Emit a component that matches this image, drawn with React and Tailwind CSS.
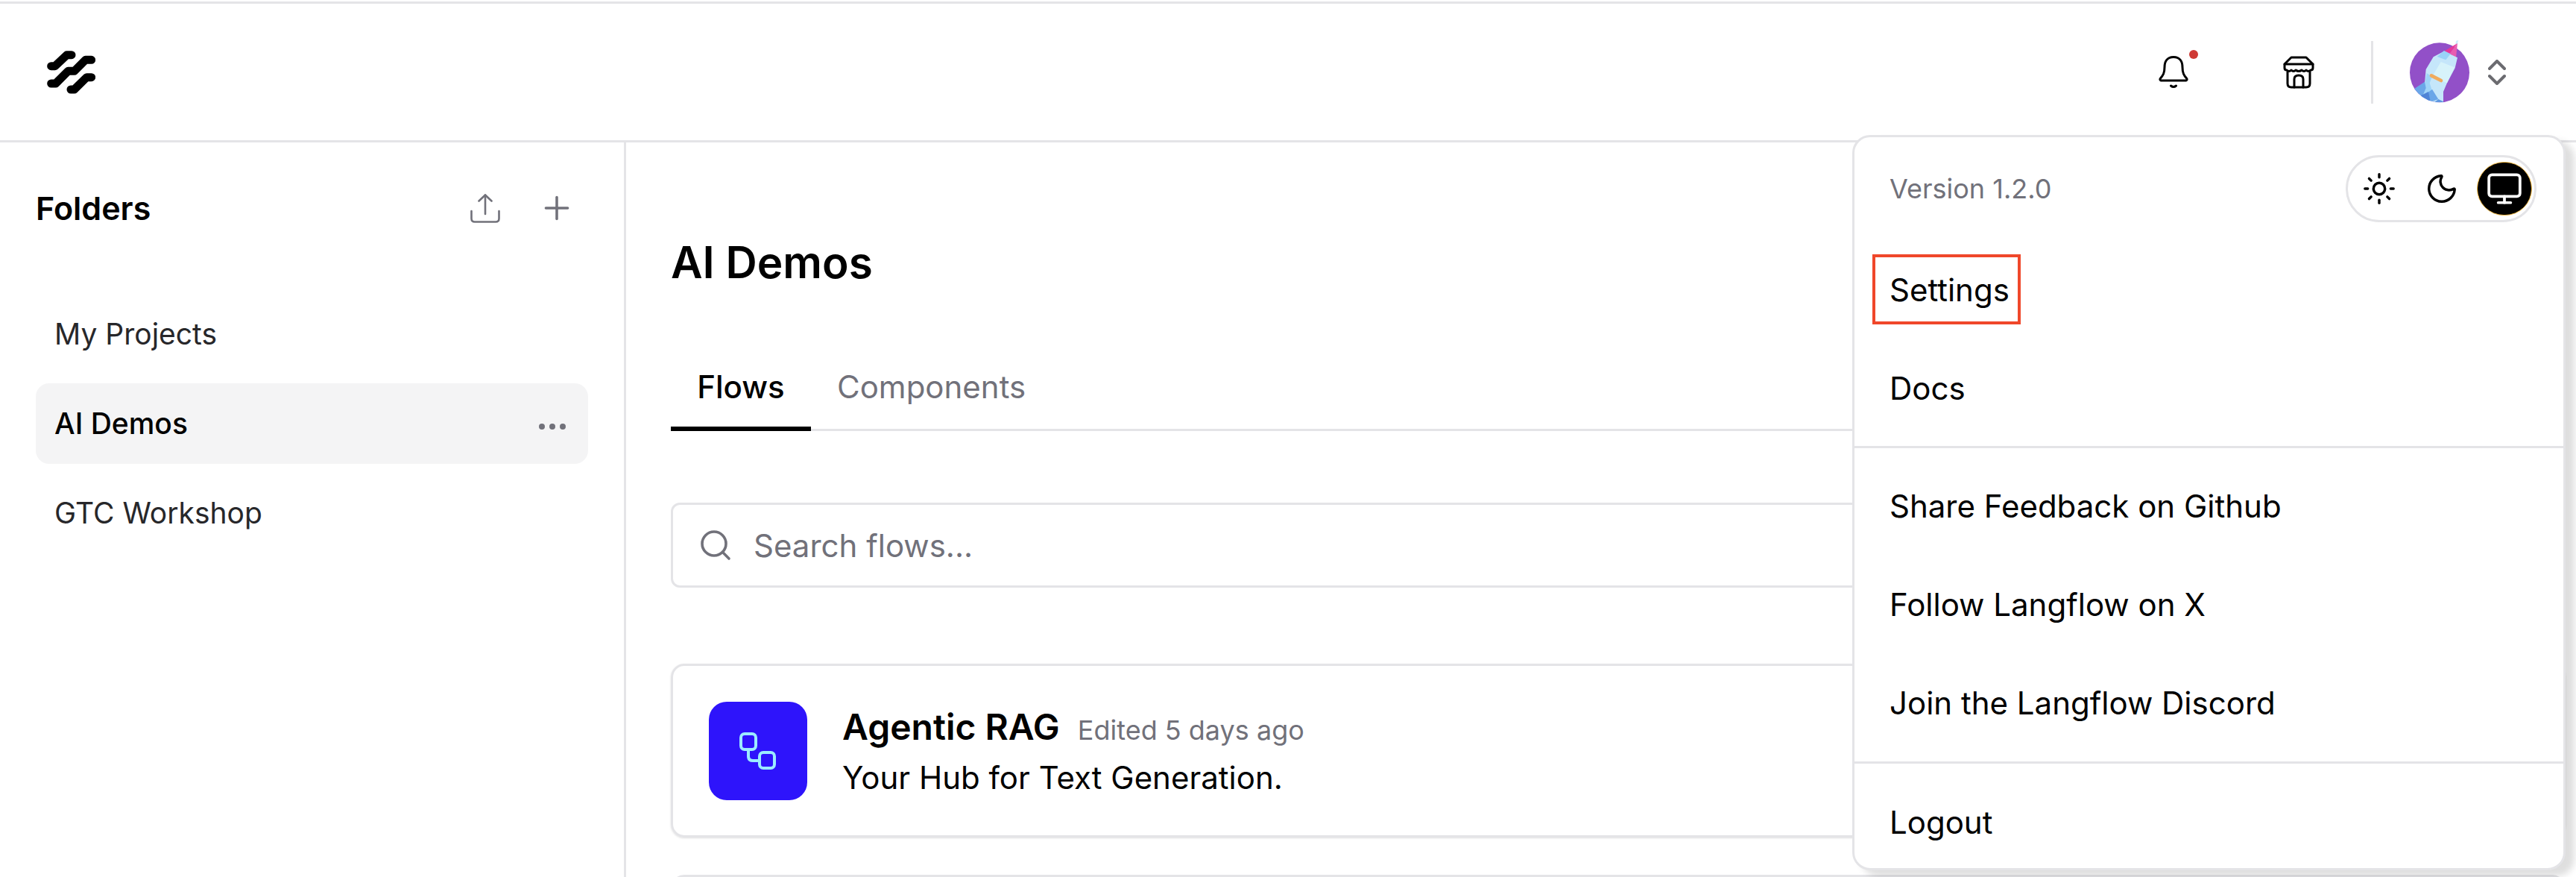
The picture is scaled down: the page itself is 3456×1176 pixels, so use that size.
import React from "react";
import { Plus, Search, Ellipsis, Sun, Moon, Monitor } from "lucide-react";

const font = "font-['Inter','Liberation_Sans',sans-serif]";

function Logo() {
  return (
    <svg width="65" height="60" viewBox="40 30 195 180" className="shrink-0">
      <g fill="none" stroke="#000" strokeWidth="33" strokeLinejoin="round" strokeLinecap="round">
        <path d="M57 95H72L120 50H139" />
        <path d="M57 165H75L125 115H150L195 70H219" />
        <path d="M136 189H150L200 140H219" />
      </g>
    </svg>
  );
}

function BellIcon() {
  return (
    <svg width="40" height="44" viewBox="0 0 40 44" fill="none" stroke="#000" strokeWidth="3" strokeLinecap="round" strokeLinejoin="round">
      <path d="M20 1.5C11 1.5 8 8 8 15C8 23 6 26 2.5 30Q1 32 3 33H37Q39 32 37.5 30C34 26 32 23 32 15C32 8 29 1.5 20 1.5Z" />
      <path d="M16.5 40Q20 43 23.5 40" />
    </svg>
  );
}

function StoreIcon() {
  return (
    <svg width="42" height="44" viewBox="0 0 42 44" fill="none" stroke="#000" strokeWidth="3" strokeLinecap="round" strokeLinejoin="round">
      <path d="M11 2H31L40 11V16Q40 19 37 19Q34 22 31 19Q28 22 25 19Q21 22 17 19Q14 22 11 19Q8 22 5 19Q2 19 2 16V11Z" />
      <path d="M2 11H40" />
      <path d="M6 21V37Q6 42 11 42H31Q36 42 36 37V21" />
      <path d="M15 42V31Q15 26 21 26Q27 26 27 31V42" />
    </svg>
  );
}

function UploadIcon() {
  return (
    <svg width="40" height="39" viewBox="0 0 40 39" fill="none" stroke="currentColor" strokeWidth="2.6" strokeLinecap="round" strokeLinejoin="round" className="text-[#71717a]">
      <path d="M11.5 9.5L20 1.5L28.5 9.5" />
      <path d="M20 1.5V27" />
      <path d="M1.5 23V33Q1.5 37.5 6 37.5H34Q38.5 37.5 38.5 33V23" />
    </svg>
  );
}

function Chevrons() {
  return (
    <svg width="24" height="34" viewBox="0 0 24 34" fill="none" stroke="#6b6b70" strokeWidth="4" strokeLinecap="round" strokeLinejoin="round" className="shrink-0">
      <path d="M2 12L12 2L22 12" />
      <path d="M2 22L12 32L22 22" />
    </svg>
  );
}

function FlowIcon() {
  return (
    <svg width="50" height="50" viewBox="0 0 50 50" fill="none" stroke="#9cecff" strokeWidth="4" strokeLinecap="round" strokeLinejoin="round">
      <rect x="2" y="2" width="20" height="21" rx="5" />
      <rect x="27" y="27" width="20" height="21" rx="5" />
      <path d="M12 23V32Q12 38 18 38H27" />
    </svg>
  );
}

function Avatar() {
  return (
    <svg width="81" height="92" viewBox="40 9 243 276" className="shrink-0">
      <defs>
        <clipPath id="avatarClip">
          <circle cx="160" cy="148" r="120" />
          <rect x="100" y="0" width="180" height="100" />
        </clipPath>
      </defs>
      <circle cx="160" cy="148" r="120" fill="#9250c8" />
      <g clipPath="url(#avatarClip)">
        <path d="M226 20L236 18L232 32L224 34Z" fill="#cdeefc" />
        <path d="M178 62L232 30L200 72Z" fill="#e5389a" />
        <path d="M232 30L226 88L200 72Z" fill="#e85cb0" />
        <path d="M178 62L232 88L222 130L190 190L175 225V275H90L100 190L105 135L135 85Z" fill="#c5e6fa" />
        <path d="M178 60L204 73L185 97L150 84Z" fill="#99d2f8" />
        <path d="M165 105L220 127L190 190L130 165Z" fill="#d7f3fa" />
        <path d="M108 150L130 165L120 190L128 215L90 275L70 240L100 195Z" fill="#9fd4f8" />
        <path d="M100 185L105 210L80 270L50 218Z" fill="#6aa6e8" />
        <path d="M130 215L155 255L100 275L85 250Z" fill="#6aa6e8" />
        <path d="M85 240L115 225L125 275H85Z" fill="#4f84d6" />
        <path d="M155 255L175 265V275H130Z" fill="#5f97e0" />
        <path d="M127 160L166 180" stroke="#f0ab5e" strokeWidth="14" strokeLinecap="round" />
      </g>
    </svg>
  );
}

function MenuRow({ children, boxed, short }) {
  return (
    <div className={`${short ? "h-[128px]" : "h-[132px]"} flex items-center px-[47px] text-[42px] text-black`}>
      <span className={boxed ? "relative" : ""}>
        {children}
        {boxed && <span className="absolute -left-[23px] -right-[15px] -top-[16px] -bottom-[15px] border-[4px] border-[#f0472a]" />}
      </span>
    </div>
  );
}

export default function App() {
  return (
    <div className={`${font} relative h-[1176px] w-[3456px] overflow-hidden bg-white text-black`}>
      <div className="h-[189px] mt-[2px] border-t-[3px] border-b-[3px] border-[#e4e4e7] flex items-center pl-[63px] pr-[94px]">
        <Logo />
        <div className="ml-auto flex items-center">
          <div className="relative mr-[127px]">
            <BellIcon />
            <span className="absolute left-[41px] -top-[8px] w-[12px] h-[12px] rounded-full bg-[#cf3a35]" />
          </div>
          <div className="mr-[76px]">
            <StoreIcon />
          </div>
          <div className="w-[3px] h-[84px] bg-[#e4e4e7] mr-[49px]" />
          <Avatar />
          <div className="ml-[24px]">
            <Chevrons />
          </div>
        </div>
      </div>

      <div className="flex h-[985px]">
        <aside className="w-[840px] shrink-0 border-r-[3px] border-[#e4e4e7] px-[48px]">
          <div className="flex items-center justify-between h-[96px] mt-[40px] pr-[17px]">
            <span className="text-[43px] font-semibold">Folders</span>
            <div className="flex items-center gap-[51px] text-[#71717a]">
              <UploadIcon />
              <Plus size={50} strokeWidth={1.7} />
            </div>
          </div>
          <div className="mt-[67px] flex flex-col gap-[12px]">
            <div className="h-[108px] flex items-center px-[25px] text-[39px] text-[#27272a]">My Projects</div>
            <div className="h-[108px] flex items-center justify-between pl-[25px] pr-[24px] rounded-[18px] bg-[#f4f4f5] text-[39px] font-medium">
              AI Demos
              <Ellipsis size={48} className="text-[#71717a] mt-[8px]" />
            </div>
            <div className="h-[108px] flex items-center px-[25px] text-[39px] text-[#27272a]">GTC Workshop</div>
          </div>
        </aside>

        <main className="flex-1 pl-[60px] pr-[14px]">
          <h1 className="mt-[126px] text-[58.5px] font-semibold leading-[70px]">AI Demos</h1>
          <div className="mt-[92px] flex h-[99px] border-b-[3px] border-[#e4e4e7] text-[42px]">
            <div className="w-[188px] h-[99px] text-center border-b-[6px] border-black pt-[8px] font-medium">Flows</div>
            <div className="ml-[35px] pt-[8px] text-[#71717a]">Components</div>
          </div>
          <div className="mt-[96px] h-[114px] border-[3px] border-[#e4e4e7] rounded-[12px] flex items-center pl-[33px] text-[#71717a] text-[42px]">
            <Search size={48} strokeWidth={1.8} className="mr-[27px]" />
            Search flows...
          </div>
          <div className="mt-[102px] h-[233px] border-[3px] border-[#e4e4e7] rounded-[18px] shadow-sm flex items-center pl-[48px]">
            <div className="w-[132px] h-[132px] rounded-[24px] bg-[#2e14fb] flex items-center justify-center">
              <FlowIcon />
            </div>
            <div className="ml-[47px]">
              <div className="flex items-baseline">
                <span className="text-[48px] font-semibold">Agentic RAG</span>
                <span className="ml-[24px] text-[36px] text-[#71717a]">Edited 5 days ago</span>
              </div>
              <div className="text-[42px]">Your Hub for Text Generation.</div>
            </div>
          </div>
          <div className="mt-[50px] h-[233px] border-[3px] border-[#e4e4e7] rounded-[18px]" />
        </main>
      </div>

      <div className="absolute left-[2485px] top-[181px] w-[957px] h-[986px] bg-white border-[3px] border-[#e4e4e7] rounded-[24px] shadow-[12px_8px_10px_rgba(0,0,0,0.13)]">
        <div className="flex items-center justify-between pl-[47px] pr-[36px] h-[138px] text-[36px] text-[#71717a]">
          Version 1.2.0
          <div className="h-[90px] w-[256px] rounded-full border-[3px] border-[#e4e4e7] flex items-center text-black">
            <Sun size={46} strokeWidth={1.8} className="ml-[19px]" />
            <Moon size={46} strokeWidth={1.8} className="ml-[38px]" />
            <div className="ml-[24px] w-[74px] h-[72px] rounded-full bg-black border border-[#f4b942] flex items-center justify-center text-white">
              <Monitor size={50} strokeWidth={1.8} />
            </div>
          </div>
        </div>
        <MenuRow boxed>Settings</MenuRow>
        <MenuRow>Docs</MenuRow>
        <div className="mt-[12px] mb-[11px] border-t-[3px] border-[#e4e4e7]" />
        <MenuRow>Share Feedback on Github</MenuRow>
        <MenuRow>Follow Langflow on X</MenuRow>
        <MenuRow>Join the Langflow Discord</MenuRow>
        <div className="mt-[13px] mb-[14px] border-t-[3px] border-[#e4e4e7]" />
        <MenuRow short>Logout</MenuRow>
      </div>
    </div>
  );
}
